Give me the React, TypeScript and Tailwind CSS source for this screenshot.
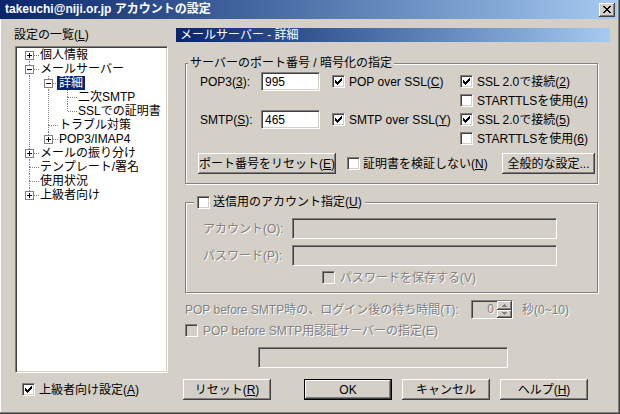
import type { ReactNode } from 'react';

const sunken =
  'border border-t-[#808080] border-l-[#808080] border-r-white border-b-white shadow-[inset_1px_1px_0_#404040,inset_-1px_-1px_0_#d4d0c8]';
const raised =
  'bg-[#d4d0c8] shadow-[inset_-1px_-1px_0_#404040,inset_1px_1px_0_#ffffff,inset_-2px_-2px_0_#808080,inset_2px_2px_0_#d4d0c8]';
const raisedDefault =
  'bg-[#d4d0c8] border border-black shadow-[inset_-1px_-1px_0_#404040,inset_1px_1px_0_#ffffff,inset_-2px_-2px_0_#808080]';
const disabledText = 'text-[#808080] [text-shadow:1px_1px_0_#ffffff]';
const etched = 'border border-[#808080] shadow-[1px_1px_0_#ffffff,inset_1px_1px_0_#ffffff]';

const checkRuns = [2, 3, 4, 3, 2, 1, 0];

const Checkbox = ({ checked = false, disabled = false }: { checked?: boolean; disabled?: boolean }) => (
  <span className={`${sunken} inline-flex w-[13px] h-[13px] shrink-0 ${disabled ? 'bg-[#d4d0c8]' : 'bg-white'}`}>
    {checked && (
      <svg width="11" height="11" viewBox="0 0 11 11" shapeRendering="crispEdges">
        {checkRuns.map((s, i) => (
          <rect key={i} x={2 + i} y={2 + s} width="1" height="3" fill="#000" />
        ))}
      </svg>
    )}
  </span>
);

const Btn = ({ children, className = '', def = false }: { children: ReactNode; className?: string; def?: boolean }) => (
  <button className={`${def ? raisedDefault : raised} h-[21px] text-[12px] leading-[14px] flex items-center justify-center ${className}`}>
    {children}
  </button>
);

type Item = { label: string; level: number; box?: '+' | '-'; selected?: boolean };

const items: Item[] = [
  { label: '個人情報', level: 0, box: '+' },
  { label: 'メールサーバー', level: 0, box: '-' },
  { label: '詳細', level: 1, box: '-', selected: true },
  { label: '二次SMTP', level: 2 },
  { label: 'SSLでの証明書', level: 2 },
  { label: 'トラブル対策', level: 1 },
  { label: 'POP3/IMAP4', level: 1, box: '+' },
  { label: 'メールの振り分け', level: 0, box: '+' },
  { label: 'テンプレート/署名', level: 0 },
  { label: '使用状況', level: 0 },
  { label: '上級者向け', level: 0, box: '+' },
];

const hasNext = (i: number, lvl: number) => {
  for (let j = i + 1; j < items.length; j++) {
    if (items[j].level < lvl) return false;
    if (items[j].level === lvl) return true;
  }
  return false;
};

const Cell = ({ pass, up, down, own, box }: { pass?: boolean; up?: boolean; down?: boolean; own?: boolean; box?: '+' | '-' }) => (
  <svg width="19" height="14" viewBox="0 0 19 14" className="shrink-0" shapeRendering="crispEdges">
    <g stroke="#808080" strokeDasharray="1 1">
      {pass && <line x1="9.5" y1="0" x2="9.5" y2="14" />}
      {own && up && <line x1="9.5" y1="0" x2="9.5" y2="7" />}
      {own && down && <line x1="9.5" y1="7" x2="9.5" y2="14" />}
      {own && <line x1="10" y1="7.5" x2="19" y2="7.5" />}
    </g>
    {box && (
      <>
        <rect x="5.5" y="3.5" width="8" height="8" fill="#fff" stroke="#808080" />
        <rect x="7" y="7" width="5" height="1" fill="#000" />
        {box === '+' && <rect x="9" y="5" width="1" height="5" fill="#000" />}
      </>
    )}
  </svg>
);

const Tree = () => (
  <div className={`${sunken} bg-white w-[153px] h-[327px] pt-[1px] pl-[4px]`}>
    {items.map((it, i) => (
      <div key={i} className="flex h-[14px] items-center">
        {Array.from({ length: it.level }).map((_, k) => (
          <Cell key={k} pass={hasNext(i, k)} />
        ))}
        <Cell own up={i !== 0} down={hasNext(i, it.level)} box={it.box} />
        <span
          className={`px-[2px] -ml-[1px] whitespace-nowrap leading-[14px] ${
            it.selected ? 'bg-[#0a246a] text-white' : ''
          }`}
        >
          {it.label}
        </span>
      </div>
    ))}
  </div>
);

const Field = ({ value = '', className = '', disabled = false }: { value?: string; className?: string; disabled?: boolean }) => (
  <div className={`${sunken} ${disabled ? 'bg-[#d4d0c8]' : 'bg-white'} pl-[3px] flex items-center ${className}`}>{value}</div>
);

export default function App() {
  return (
    <div className="w-[620px] h-[414px] bg-[#d4d0c8] font-['Liberation_Sans','Noto_Sans_CJK_JP',sans-serif] text-[12px] leading-[14px] text-black overflow-hidden flex flex-col shadow-[inset_-1px_-1px_0_#404040,inset_-2px_-2px_0_#808080,inset_1px_0_0_#ffffff]">
      {/* title bar */}
      <div className="h-[19px] mr-[3px] flex items-center justify-between bg-linear-to-r from-[#0a246a] to-[#a6caf0]">
        <span className="pl-[5px] font-bold text-white leading-[19px]">takeuchi@niji.or.jp アカウントの設定</span>
        <span className={`${raised} w-[16px] h-[14px] mr-[2px] flex items-center justify-center`}>
          <svg width="8" height="7" viewBox="0 0 8 7" shapeRendering="crispEdges">
            {[0, 1, 2, 3, 4, 5, 6].map((r) => {
              const d = r <= 3 ? r : 6 - r;
              return (
                <g key={r} fill="#000">
                  <rect x={d} y={r} width="2" height="1" />
                  <rect x={6 - d} y={r} width="2" height="1" />
                </g>
              );
            })}
          </svg>
        </span>
      </div>

      <div className="flex pt-[9px]">
        {/* left column */}
        <div className="ml-[14px] w-[154px] flex flex-col">
          <div className="h-[14px]">
            設定の一覧(<u>L</u>)
          </div>
          <div className="mt-[4px] ml-[1px]">
            <Tree />
          </div>
          <div className="mt-[10px] ml-[8px] flex items-center gap-[4px] h-[13px]">
            <Checkbox checked />
            <span>
              上級者向け設定(<u>A</u>)
            </span>
          </div>
        </div>

        {/* right column */}
        <div className="ml-[8px] w-[434px] flex flex-col">
          <div className="h-[14px] pl-[4px] text-white bg-linear-to-r from-[#0a246a] to-[#a6caf0]">メールサーバー - 詳細</div>

          <fieldset className={`${etched} mt-[14px] ml-[9px] w-[413px] pt-[2px] pb-[9px]`}>
            <legend className="ml-[2px] px-[2px] bg-[#d4d0c8] leading-[14px]">サーバーのポート番号 / 暗号化の指定</legend>
            <div className="ml-[14px] grid grid-cols-[61px_59px_140px_1fr] grid-rows-[19px_19px_19px_19px] items-center">
              <span>
                POP3(<u>3</u>):
              </span>
              <Field value="995" className="h-[19px]" />
              <div className="pl-[12px] flex items-center gap-[4px]">
                <Checkbox checked />
                <span>
                  POP over SSL(<u>C</u>)
                </span>
              </div>
              <div className="flex items-center gap-[4px]">
                <Checkbox checked />
                <span>
                  SSL 2.0で接続(<u>2</u>)
                </span>
              </div>
              <div className="col-start-4 flex items-center gap-[4px]">
                <Checkbox />
                <span>
                  STARTTLSを使用(<u>4</u>)
                </span>
              </div>
              <span>
                SMTP(<u>S</u>):
              </span>
              <Field value="465" className="h-[19px]" />
              <div className="pl-[12px] flex items-center gap-[4px]">
                <Checkbox checked />
                <span>
                  SMTP over SSL(<u>Y</u>)
                </span>
              </div>
              <div className="flex items-center gap-[4px]">
                <Checkbox checked />
                <span>
                  SSL 2.0で接続(<u>5</u>)
                </span>
              </div>
              <div className="col-start-4 flex items-center gap-[4px]">
                <Checkbox />
                <span>
                  STARTTLSを使用(<u>6</u>)
                </span>
              </div>
            </div>
            <div className="mt-[5px] flex items-center">
              <Btn className="ml-[12px] w-[138px]">
                ポート番号をリセット(<u>E</u>)
              </Btn>
              <div className="ml-[11px] flex items-center gap-[3px]">
                <Checkbox />
                <span>
                  証明書を検証しない(<u>N</u>)
                </span>
              </div>
              <Btn className="ml-auto mr-[2px] w-[93px]">全般的な設定...</Btn>
            </div>
          </fieldset>

          <fieldset className={`${etched} mt-[11px] ml-[9px] w-[413px] pt-[9px] pb-[5px]`}>
            <legend className="ml-[8px] px-[3px] bg-[#d4d0c8] leading-[14px] flex items-center gap-[3px]">
              <Checkbox />
              <span>
                送信用のアカウント指定(<u>U</u>)
              </span>
            </legend>
            <div className="flex items-center">
              <span className={`ml-[17px] w-[89px] ${disabledText}`}>アカウント(O):</span>
              <Field disabled className="w-[265px] h-[21px]" />
            </div>
            <div className="mt-[6px] flex items-center">
              <span className={`ml-[17px] w-[89px] ${disabledText}`}>パスワード(P):</span>
              <Field disabled className="w-[265px] h-[21px]" />
            </div>
            <div className="mt-[2px] h-[19px] ml-[136px] flex items-center gap-[5px]">
              <Checkbox disabled />
              <span className={disabledText}>パスワードを保存する(V)</span>
            </div>
          </fieldset>

          <div className="mt-[7px] ml-[9px] flex items-center h-[19px]">
            <span className={`w-[286px] whitespace-nowrap ${disabledText}`}>POP before SMTP時の、ログイン後の待ち時間(T):</span>
            <div className={`${sunken} bg-[#d4d0c8] w-[42px] h-[19px] flex`}>
              <span className={`flex-1 text-right pr-[3px] leading-[17px] ${disabledText}`}>0</span>
              <div className="w-[15px] flex flex-col">
                <span className={`${raised} flex-1 flex items-center justify-center`}>
                  <svg width="5" height="3" viewBox="0 0 5 3" shapeRendering="crispEdges">
                    <path d="M2 0h1v1h1v1h1v1H0V2h1V1h1z" fill="#808080" />
                  </svg>
                </span>
                <span className={`${raised} flex-1 flex items-center justify-center`}>
                  <svg width="5" height="3" viewBox="0 0 5 3" shapeRendering="crispEdges">
                    <path d="M0 0h5v1H4v1H3v1H2V2H1V1H0z" fill="#808080" />
                  </svg>
                </span>
              </div>
            </div>
            <span className={`ml-[9px] ${disabledText}`}>秒(0~10)</span>
          </div>

          <div className="mt-[2px] ml-[9px] h-[19px] flex items-center gap-[5px]">
            <Checkbox disabled />
            <span className={disabledText}>POP before SMTP用認証サーバーの指定(E)</span>
          </div>

          <Field disabled className="mt-[7px] ml-[82px] w-[250px] h-[21px]" />

          <div className="mt-[11px] ml-[7px] flex items-center">
            <Btn className="w-[88px]">
              リセット(<u>R</u>)
            </Btn>
            <Btn def className="ml-[33px] w-[88px]">
              OK
            </Btn>
            <Btn className="ml-[10px] w-[88px]">キャンセル</Btn>
            <Btn className="ml-[10px] w-[88px]">
              ヘルプ(<u>H</u>)
            </Btn>
          </div>
        </div>
      </div>
    </div>
  );
}
